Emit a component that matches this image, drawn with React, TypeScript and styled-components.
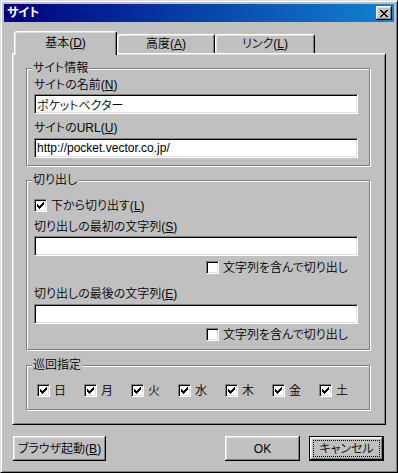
import styled, { createGlobalStyle } from "styled-components";

const GlobalStyle = createGlobalStyle`
  html, body {
    margin: 0;
    padding: 0;
    background: #c0c0c0;
  }
  body {
    font-family: "Liberation Sans", "Noto Sans CJK JP", sans-serif;
    font-size: 12px;
    font-weight: 350;
    color: #000;
    font-feature-settings: "palt";
  }
`;

const Window = styled.div`
  box-sizing: border-box;
  width: 398px;
  height: 473px;
  background: #c0c0c0;
  border: 1px solid;
  border-color: #dfdfdf #000 #000 #dfdfdf;
  box-shadow: inset 1px 1px #fff, inset -1px -1px #808080;
  padding: 3px;
  display: flex;
  flex-direction: column;
`;

const TitleBar = styled.div`
  height: 18px;
  flex: none;
  display: flex;
  align-items: center;
  justify-content: space-between;
  padding: 0 2px 0 3px;
  background: linear-gradient(to right, #000080, #1084d0);
`;

const TitleText = styled.span`
  color: #fff;
  font-weight: bold;
  font-size: 12px;
  line-height: 12px;
`;

const CloseButton = styled.div`
  box-sizing: border-box;
  width: 16px;
  height: 14px;
  background: #c0c0c0;
  display: flex;
  align-items: center;
  justify-content: center;
  box-shadow: inset -1px -1px #000, inset 1px 1px #fff, inset -2px -2px #808080,
    inset 2px 2px #dfdfdf;
`;

const Body = styled.div`
  flex: 1;
  display: flex;
  flex-direction: column;
  padding: 9px 8px 0 8px;
`;

const TabStrip = styled.div`
  display: flex;
  align-items: flex-end;
  height: 22px;
  padding-left: 2px;
`;

const Tab = styled.div<{ $active?: boolean; $w: number }>`
  box-sizing: border-box;
  position: relative;
  z-index: ${(p) => (p.$active ? 1 : 0)};
  width: ${(p) => p.$w}px;
  height: ${(p) => (p.$active ? 24 : 19)}px;
  margin-bottom: ${(p) => (p.$active ? -2 : 0)}px;
  background: #c0c0c0;
  border: 1px solid;
  border-bottom: none;
  border-color: #fff #000 transparent #fff;
  border-radius: 3px 3px 0 0;
  box-shadow: inset 1px 1px #dfdfdf, inset -1px 0 #808080;
  text-align: center;
  line-height: 12px;
  padding-top: ${(p) => (p.$active ? 5 : 3)}px;
`;

const Panel = styled.div`
  box-sizing: border-box;
  height: 372px;
  border: 1px solid;
  border-color: #fff #000 #000 #fff;
  box-shadow: inset 1px 1px #dfdfdf, inset -1px -1px #808080;
  padding: 8px 0 0 13px;
  display: flex;
  flex-direction: column;
`;

const Group = styled.fieldset<{ $top?: number; $bottom: number }>`
  box-sizing: border-box;
  width: 344px;
  margin: ${(p) => p.$top ?? 0}px 0 0 0;
  padding: 0 0 ${(p) => p.$bottom}px 7px;
  border: 1px solid #808080;
  box-shadow: 1px 1px #fff, inset 1px 1px #fff;
  min-width: 0;
`;

const Legend = styled.legend`
  padding: 0 1px;
  margin-left: -2px;
  line-height: 12px;
  height: 12px;
  background: #c0c0c0;
`;

const FieldLabel = styled.div<{ $top: number }>`
  margin-top: ${(p) => p.$top}px;
  line-height: 12px;
  height: 12px;
  white-space: nowrap;
`;

const TextBox = styled.input<{ $top: number }>`
  display: block;
  box-sizing: border-box;
  width: 324px;
  height: 20px;
  margin: ${(p) => p.$top}px 0 0 0;
  padding: 0 2px;
  border: 1px solid;
  border-color: #808080 #fff #fff #808080;
  box-shadow: inset 1px 1px #000, inset -1px -1px #dfdfdf;
  background: #fff;
  font-family: "Liberation Sans", "Noto Sans CJK JP", sans-serif;
  font-size: 12px;
  font-weight: 350;
  font-feature-settings: "palt";
  color: #000;
  outline: none;
`;

const CheckRow = styled.div<{ $top: number; $indent?: number }>`
  display: flex;
  align-items: center;
  gap: 4px;
  height: 13px;
  margin-top: ${(p) => p.$top}px;
  margin-left: ${(p) => p.$indent ?? 0}px;
  line-height: 12px;
  white-space: nowrap;
`;

const Box = styled.span`
  box-sizing: border-box;
  flex: none;
  width: 13px;
  height: 13px;
  background: #fff;
  border: 1px solid;
  border-color: #808080 #fff #fff #808080;
  box-shadow: inset 1px 1px #000, inset -1px -1px #dfdfdf;
  display: flex;
  align-items: center;
  justify-content: center;
`;

const DayGrid = styled.div`
  display: grid;
  grid-template-columns: repeat(7, 47px);
  margin: 13px 0 0 3px;
`;

const ButtonRow = styled.div`
  display: flex;
  align-items: center;
  margin-top: 11px;
  padding: 0 2px 0 1px;
  gap: 9px;
`;

const Button = styled.div<{ $w: number; $default?: boolean }>`
  box-sizing: border-box;
  width: ${(p) => p.$w}px;
  height: 25px;
  display: flex;
  align-items: center;
  justify-content: center;
  line-height: 12px;
  background: #c0c0c0;
  border: ${(p) => (p.$default ? "1px solid #000" : "none")};
  box-shadow: inset -1px -1px #000, inset 1px 1px #fff, inset -2px -2px #808080,
    inset 2px 2px #dfdfdf;
  outline: ${(p) => (p.$default ? "1px dotted #000" : "none")};
  outline-offset: -5px;
`;

const Spacer = styled.div`
  flex: 1;
`;

const Mn = styled.u`
  text-decoration: underline;
  text-underline-offset: 1px;
`;

function CloseGlyph() {
  const rows = [
    [0, 1, 6, 7],
    [1, 2, 5, 6],
    [2, 3, 4, 5],
    [3, 4],
    [2, 3, 4, 5],
    [1, 2, 5, 6],
    [0, 1, 6, 7],
  ];
  return (
    <svg width="8" height="7" viewBox="0 0 8 7" shapeRendering="crispEdges">
      {rows.map((xs, y) =>
        xs.map((x) => <rect key={`${x}-${y}`} x={x} y={y} width="1" height="1" fill="#000" />)
      )}
    </svg>
  );
}

function CheckMark() {
  const rows: [number, number][][] = [
    [[6, 6]],
    [[5, 6]],
    [[0, 0], [4, 6]],
    [[0, 1], [3, 5]],
    [[0, 4]],
    [[1, 3]],
    [[2, 2]],
  ];
  return (
    <svg width="7" height="7" viewBox="0 0 7 7" shapeRendering="crispEdges">
      {rows.map((segs, y) =>
        segs.map(([a, b]) => (
          <rect key={`${a}-${y}`} x={a} y={y} width={b - a + 1} height="1" fill="#000" />
        ))
      )}
    </svg>
  );
}

function Check({ checked, label, top, indent }: { checked?: boolean; label: React.ReactNode; top?: number; indent?: number }) {
  return (
    <CheckRow $top={top ?? 0} $indent={indent}>
      <Box>{checked && <CheckMark />}</Box>
      <span>{label}</span>
    </CheckRow>
  );
}

const days = ["日", "月", "火", "水", "木", "金", "土"];

export default function App() {
  return (
    <>
      <GlobalStyle />
      <Window>
        <TitleBar>
          <TitleText>サイト</TitleText>
          <CloseButton>
            <CloseGlyph />
          </CloseButton>
        </TitleBar>
        <Body>
          <TabStrip>
            <Tab $active $w={103}>
              基本(<Mn>D</Mn>)
            </Tab>
            <Tab $w={98}>
              高度(<Mn>A</Mn>)
            </Tab>
            <Tab $w={100}>
              リンク(<Mn>L</Mn>)
            </Tab>
          </TabStrip>
          <Panel>
            <Group $bottom={7}>
              <Legend>サイト情報</Legend>
              <FieldLabel $top={5}>
                サイトの名前(<Mn>N</Mn>)
              </FieldLabel>
              <TextBox $top={3} readOnly value="ポケットベクター" />
              <FieldLabel $top={8}>
                サイトのURL(<Mn>U</Mn>)
              </FieldLabel>
              <TextBox $top={4} readOnly value="http://pocket.vector.co.jp/" />
            </Group>
            <Group $top={8} $bottom={8}>
              <Legend>切り出し</Legend>
              <Check
                top={13}
                checked
                label={
                  <>
                    下から切り出す(<Mn>L</Mn>)
                  </>
                }
              />
              <FieldLabel $top={9}>
                切り出しの最初の文字列(<Mn>S</Mn>)
              </FieldLabel>
              <TextBox $top={3} readOnly value="" />
              <Check top={5} indent={172} label="文字列を含んで切り出し" />
              <FieldLabel $top={14}>
                切り出しの最後の文字列(<Mn>E</Mn>)
              </FieldLabel>
              <TextBox $top={4} readOnly value="" />
              <Check top={4} indent={172} label="文字列を含んで切り出し" />
            </Group>
            <Group $top={9} $bottom={12}>
              <Legend>巡回指定</Legend>
              <DayGrid>
                {days.map((d) => (
                  <Check key={d} checked label={d} />
                ))}
              </DayGrid>
            </Group>
          </Panel>
          <ButtonRow>
            <Button $w={93}>
              ブラウザ起動(<Mn>B</Mn>)
            </Button>
            <Spacer />
            <Button $w={75}>OK</Button>
            <Button $w={75} $default>
              キャンセル
            </Button>
          </ButtonRow>
        </Body>
      </Window>
    </>
  );
}
